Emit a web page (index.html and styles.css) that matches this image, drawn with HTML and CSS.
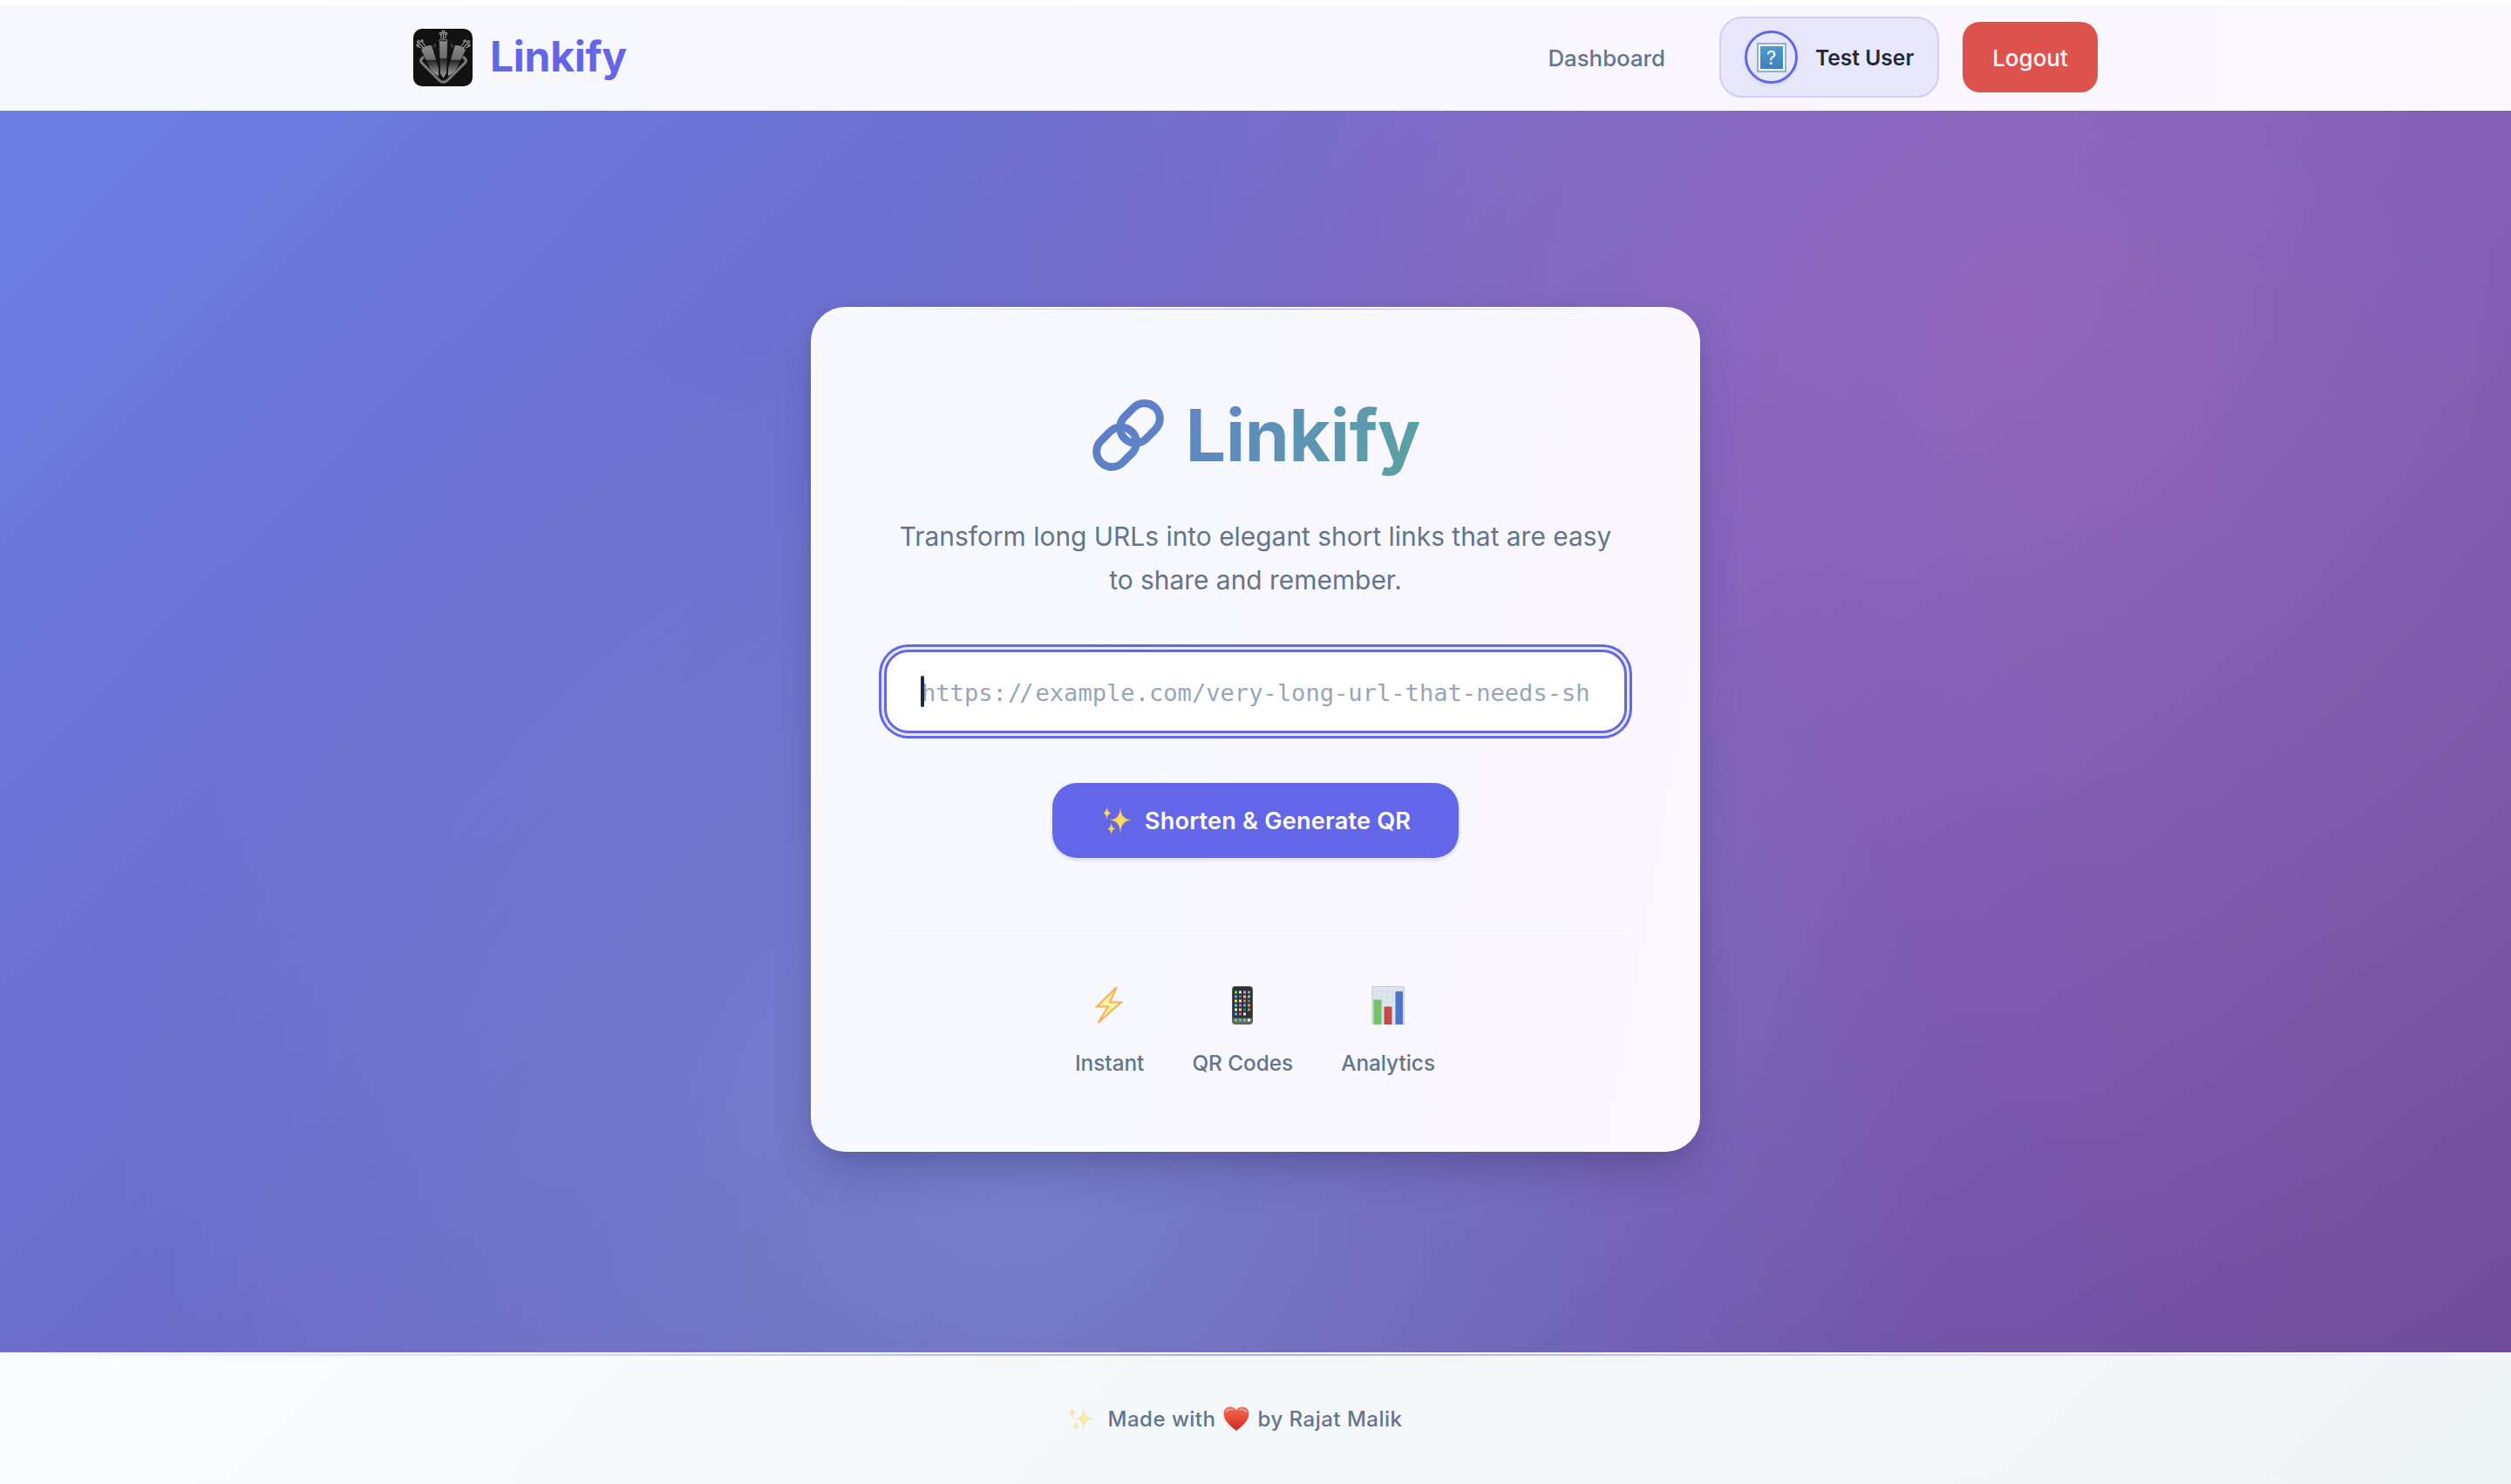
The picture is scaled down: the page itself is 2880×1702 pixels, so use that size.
FILE: index.html
```html
<!DOCTYPE html>
<html lang="en">
<head>
<meta charset="utf-8">
<title>Linkify</title>
<link rel="stylesheet" href="styles.css">
</head>
<body>
<header class="topbar">
  <div class="topbar-inner">
    <a class="brand">
      <svg class="brand-logo" viewBox="0 0 68 66" aria-hidden="true">
        <defs>
          <linearGradient id="tube" x1="0" y1="0" x2="0" y2="1"><stop offset="0" stop-color="#8a8a8a"/><stop offset=".46" stop-color="#6e6e6e"/><stop offset=".5" stop-color="#262626"/><stop offset="1" stop-color="#a4a4a4"/></linearGradient>
        </defs>
        <rect width="68" height="66" rx="10" fill="#121212"/>
        <path d="M22 20l4-4v6zM47 20l-4-4v6z" fill="#3a3a3a"/>
        <path d="M11 33q-4 3-1 6l20 20q4.500 4 9 0l20-20q3-3-1-6" fill="none" stroke="#7b7b7b" stroke-width="3.400" stroke-linecap="round"/>
        <path d="M10 37l21 21q3.500 3 7 0l21-21" fill="none" stroke="#2b2b2b" stroke-width="1"/>
        <path d="M9 24q4-5 12-5l8 26v9q-9-4-12-13z" fill="url(#tube)"/>
        <path d="M60 24q-4-5-12-5l-8 26v9q9-4 12-13z" fill="url(#tube)"/>
        <path d="M29.500 13h10l-1 38-4 6-4-6z" fill="url(#tube)" stroke="#121212" stroke-width=".8"/>
        <ellipse cx="34.500" cy="13.500" rx="5" ry="1.600" fill="#333" stroke="#999" stroke-width=".8"/>
        <g fill="none" stroke="#9a9a9a" stroke-width="1.200"><path d="M34.500 12V5M32 11V7M37 11V7"/><circle cx="34.500" cy="3.500" r="1.400"/><circle cx="31.500" cy="5.500" r="1.200"/><circle cx="37.500" cy="5.500" r="1.200"/><path d="M12 22l-5-5M14 20l-4-5M9 22l-4-2"/><circle cx="6" cy="15" r="1.400"/><circle cx="10" cy="14" r="1.200"/><circle cx="5" cy="19" r="1.200"/><path d="M57 22l5-5M55 20l4-5M60 22l4-2"/><circle cx="63" cy="15" r="1.400"/><circle cx="59" cy="14" r="1.200"/><circle cx="64" cy="19" r="1.200"/></g>
      </svg>
      <span class="brand-name">Linkify</span>
    </a>
    <nav class="nav">
      <a class="nav-link">Dashboard</a>
      <div class="user">
        <span class="avatar"><span class="avatar-missing">?</span></span>
        <span class="user-name">Test User</span>
      </div>
      <button class="logout"><span>Logout</span></button>
    </nav>
  </div>
</header>
<main class="hero">
  <section class="card">
    <h1 class="title">
      <svg class="title-icon" viewBox="0 0 82 82" aria-hidden="true"><defs><linearGradient id="link-fill" gradientUnits="userSpaceOnUse" x1="0" y1="0" x2="82" y2="82"><stop offset="0" stop-color="#6179ce"/><stop offset="1" stop-color="#5d88c2"/></linearGradient></defs><g fill="none" stroke="url(#link-fill)" stroke-width="9"><path d="M36.850 20.050L47.250 9.650A17.600 17.600 0 0 1 72.150 34.550L61.750 44.950A17.600 17.600 0 0 1 36.850 20.050Z"/><path d="M9.850 47.450L20.250 37.050A17.600 17.600 0 0 1 45.150 61.950L34.750 72.350A17.600 17.600 0 0 1 9.850 47.450Z"/></g></svg>
      <span class="title-text">Linkify</span>
    </h1>
    <p class="lead"><span>Transform long URLs into elegant short links that are easy</span><br><span>to share and remember.</span></p>
    <div class="field"><span class="caret"></span><span class="placeholder">https:<span class="slashes">//</span>example.com/very-long-url-that-needs-sh</span></div>
    <button class="submit">
      <svg class="spark" viewBox="0 0 32 32" aria-hidden="true"><use href="#sparkles"/></svg>
      <span>Shorten &amp; Generate QR</span>
    </button>
    <ul class="features">
      <li class="feature">
        <svg class="feature-icon" viewBox="0 0 44 44" aria-hidden="true"><path d="M29.500 1.500L7 23.500h13L8.500 42 35 18.500H22z" fill="#fff3a0" stroke="#f4b05a" stroke-width="2"/></svg>
        <span>Instant</span>
      </li>
      <li class="feature">
        <svg class="feature-icon" viewBox="0 0 44 44" aria-hidden="true"><rect x="10.500" y=".5" width="23" height="43" rx="3" fill="#303033" stroke="#59595c"/>
          <g stroke-width="3" fill="none">
          <path stroke="#72d36e" d="M13 7h3"/><path stroke="#eee" d="M18 7h3"/><path stroke="#c39bdc" d="M23 7h3"/><path stroke="#999" d="M28 7h3"/>
          <path stroke="#5aa9ee" d="M13 12h3"/><path stroke="#777" d="M18 12h3"/><path stroke="#d6c9ae" d="M23 12h3"/><path stroke="#69cdea" d="M28 12h3"/>
          <path stroke="#f0dc6e" d="M13 17h3"/><path stroke="#eee" d="M18 17h3"/><path stroke="#e0746b" d="M23 17h3"/><path stroke="#777" d="M28 17h3"/>
          <path stroke="#69cde0" d="M13 22h3"/><path stroke="#d768e0" d="M18 22h3"/><path stroke="#58aeea" d="M23 22h3"/><path stroke="#f09a3d" d="M28 22h3"/>
          <path stroke="#eee" d="M13 27h3"/><path stroke="#ecd95d" d="M18 27h3"/><path stroke="#666" d="M23 27h3"/><path stroke="#999" d="M28 27h3"/>
          <path stroke="#5aa9ee" d="M13 32h3"/><path stroke="#e4655c" d="M18 32h3"/><path stroke="#eee" d="M23 32h3"/></g>
          <path d="M11 36.500h22V41q0 2-2 2H13q-2 0-2-2z" fill="#66686b"/>
          <g stroke-width="3" fill="none"><path stroke="#72d36e" d="M13 39h3"/><path stroke="#5ab9ee" d="M18 39h3"/><path stroke="#72d36e" d="M23 39h3"/><path stroke="#fff" d="M28 39h3"/></g>
        </svg>
        <span>QR Codes</span>
      </li>
      <li class="feature">
        <svg class="feature-icon" viewBox="0 0 44 44" aria-hidden="true"><rect x="3.500" width="37" height="44" fill="#dde5ee"/><path d="M9 0v44M15 0v44M21 0v44M27 0v44M33 0v44M3.500 6h37M3.500 12h37M3.500 18h37M3.500 24h37M3.500 30h37M3.500 36h37" stroke="#d0dae6" stroke-width=".7"/><path d="M4 44V.5h36.500V44" fill="none" stroke="#c6cdd6"/><path d="M5.500 15.500h9V44h-9z" fill="#72c463"/><path d="M17.500 23.500h9V44h-9z" fill="#bd4d46"/><path d="M30.500 6H39v38h-8.500z" fill="#4d76cb"/></svg>
        <span>Analytics</span>
      </li>
    </ul>
  </section>
</main>
<footer class="footer">
  <svg class="footer-spark" viewBox="0 0 32 32" aria-hidden="true"><g id="sparkles" fill="#fcdc5c" stroke="#e9a94a" stroke-width=".4"><path d="M20 1.500Q20.500 14.500 32 15.500 20.500 16.500 20 30 19.500 16.500 8.500 15.500 19.500 14.500 20 1.500z"/><path d="M20 8Q20.500 14 26 15.500 20.500 17 20 23 19.500 17 14 15.500 19.500 14 20 8z" stroke="none"/><path d="M4.500.5Q5 6.500 9 7.500 5 8.500 4.500 14.500 4 8.500.5 7.500 4 6.500 4.500.5z"/><path d="M9.500 19Q10 24.500 14 25.500 10 26.500 9.500 31.500 9 26.500 5.500 25.500 9 24.500 9.500 19z"/></g></svg>
  <span class="made">Made with</span>
  <svg class="heart" viewBox="0 0 30 28" aria-hidden="true"><defs><linearGradient id="heart-fill" x1="0" y1="0" x2="0" y2="1"><stop offset="0" stop-color="#f0695a"/><stop offset=".5" stop-color="#ea4a37"/><stop offset="1" stop-color="#c5281d"/></linearGradient></defs><path d="M15 28C9 23 .5 17 .5 8.500.5 3.500 4 .5 8 .5c3 0 5.500 1.500 7 4 1.500-2.500 4-4 7-4 4 0 7.500 3 7.500 8C29.500 17 21 23 15 28z" fill="url(#heart-fill)"/><path d="M3.500 6q3-4 7.500-2.500M19 3.500q4.500-1.500 7.500 2.500" fill="none" stroke="#f9b3a8" stroke-width="1.400" stroke-linecap="round"/></svg>
  <span class="by">by Rajat Malik</span>
</footer>
</body>
</html>
```
FILE: styles.css
```css
* { box-sizing: border-box; }
body {
  margin: 0;
  min-height: 1702px;
  display: flex;
  flex-direction: column;
  font-family: "Inter", "Liberation Sans", sans-serif;
  color: #64748b;
  background: #fff;
}
button { font: inherit; border: 0; }
.topbar {
  height: 127px;
  border-top: 6px solid #fff;
  background: linear-gradient(90deg, #f7f8ff, #f9f7ff 45%, #fbf8fe);
}
.topbar-inner {
  width: 1932px;
  height: 119px;
  margin: 0 auto;
  display: flex;
  align-items: center;
  justify-content: space-between;
}
.brand { display: flex; align-items: center; gap: 20px; }
.brand-logo { width: 68px; height: 66px; }
.brand-name {
  font-size: 48px;
  font-weight: 700;
  color: #6366e9;
  line-height: 60px;
  letter-spacing: -.3px;
  padding-bottom: 1px;
}
.nav { display: flex; align-items: center; }
.nav-link { font-size: 25.8px; font-weight: 500; margin-right: 62px; padding-top: 2px; }
.user {
  width: 252px;
  height: 93px;
  display: flex;
  align-items: center;
  gap: 20px;
  padding-left: 27px;
  border: 2px solid #d1cffa;
  border-radius: 26px;
  background: #e9e7fc;
  margin-right: 27px;
}
.avatar {
  width: 61px;
  height: 61px;
  display: grid;
  place-items: center;
  border: 3px solid #6366e9;
  border-radius: 50%;
  box-shadow: 0 2px 4px rgba(0, 0, 0, .08);
}
.avatar-missing {
  width: 30px;
  height: 30px;
  display: grid;
  place-items: center;
  border: 2px solid #fff;
  outline: 2px solid #8fb0d4;
  background: linear-gradient(#4d9bd0, #3f7fbd);
  color: #fff;
  font-size: 22px;
  line-height: 26px;
}
.user-name { font-size: 24.6px; font-weight: 600; color: #1e293b; padding-top: 1px; }
.logout {
  width: 155px;
  height: 81px;
  padding: 2px 0 0;
  border-radius: 20px;
  background: #de524d;
  color: #fff;
  font-size: 26px;
  font-weight: 500;
}
.hero {
  height: 1424px;
  display: flex;
  justify-content: center;
  padding-top: 225px;
  background:
    radial-gradient(circle at 41% 86%, rgba(130, 170, 225, .4), transparent 50%),
    radial-gradient(circle at 80% 16%, rgba(240, 119, 190, .28), transparent 50%),
    linear-gradient(135deg, #6b7fe2 0%, #6c6ccb 35%, #704c9b 100%);
}
.card {
  position: relative;
  width: 1020px;
  height: 969px;
  padding: 86px 82px 0;
  display: flex;
  flex-direction: column;
  align-items: center;
  border: 2px solid #fcfcff;
  border-radius: 40px;
  background: linear-gradient(100deg, #f8f9ff 30%, #f9f7ff 60%, #fbf8fe);
  box-shadow: 0 26px 50px -10px rgba(40, 30, 80, .3), 0 4px 16px rgba(40, 30, 80, .06);
}
.card::before {
  content: "";
  position: absolute;
  top: 0;
  left: 0;
  right: 0;
  height: 1px;
  background: linear-gradient(90deg, transparent 3%, #a5a7f5 50%, transparent 97%);
}
.title {
  margin: 0;
  height: 118px;
  padding-left: 2px;
  display: flex;
  align-items: center;
  gap: 25px;
  font-size: 82px;
  font-weight: 700;
  letter-spacing: -.3px;
}
.title-icon { width: 82px; height: 82px; overflow: visible; }
.title-text {
  background: linear-gradient(115deg, #5f84c6, #5aa3a0);
  background-clip: text;
  color: transparent;
}
.lead { margin: 32px 0 0; font-size: 29.92px; line-height: 50px; text-align: center; white-space: nowrap; }
.field {
  flex: none;
  width: 852px;
  height: 96px;
  margin-top: 55px;
  display: flex;
  align-items: center;
  padding-left: 39px;
  border: 3px solid #6366e9;
  border-radius: 28px;
  background: #fff;
  box-shadow: 0 0 0 3px #e8e7fc, 0 0 0 6px #6366e9;
}
.caret {
  width: 4px;
  height: 36px;
  margin-right: -3px;
  border-radius: 2px;
  background: #1e293b;
  z-index: 1;
}
.placeholder {
  font-family: "DejaVu Sans Mono", monospace;
  font-size: 27.1px;
  color: #98a5b9;
  white-space: nowrap;
  padding-top: 3px;
}
.slashes { letter-spacing: -3px; padding: 0 5px 0 1px; }
.submit {
  flex: none;
  width: 466px;
  height: 86px;
  margin-top: 57px;
  display: flex;
  align-items: center;
  justify-content: center;
  gap: 16px;
  padding: 0 4px 0 7px;
  border-radius: 28px;
  background: #6366e9;
  color: #fff;
  font-size: 27.2px;
  font-weight: 600;
  letter-spacing: .15px;
  box-shadow: 0 2px 5px rgba(0, 0, 0, .15);
}
.spark { width: 32px; height: 32px; }
.features {
  list-style: none;
  width: 852px;
  margin: 82px 0 0;
  padding: 63px 1px 0 0;
  display: flex;
  justify-content: center;
  gap: 55px;
  border-top: 2px solid #f3f4fa;
}
.feature {
  display: flex;
  flex-direction: column;
  align-items: center;
  gap: 29px;
  font-size: 24.3px;
  font-weight: 500;
  line-height: 30px;
}
.feature-icon { width: 44px; height: 44px; }
.footer {
  position: relative;
  height: 151px;
  border-top: 2px solid #f5f6fe;
  display: flex;
  justify-content: center;
  padding: 60px 46px 0 0;
  font-size: 24px;
  font-weight: 500;
  line-height: 30px;
  letter-spacing: .5px;
  background: linear-gradient(135deg, #fafbfe, #f0f5f8);
}
.footer::before {
  content: "";
  position: absolute;
  top: 0;
  left: 0;
  right: 0;
  height: 2px;
  background: linear-gradient(90deg, transparent, #a9abf6 50%, transparent);
}
.footer-spark { width: 27px; height: 27px; opacity: .5; margin: 1px 18px 0 0; }
.heart { width: 30px; height: 28px; margin: 0 10px 0 8px; }
```
